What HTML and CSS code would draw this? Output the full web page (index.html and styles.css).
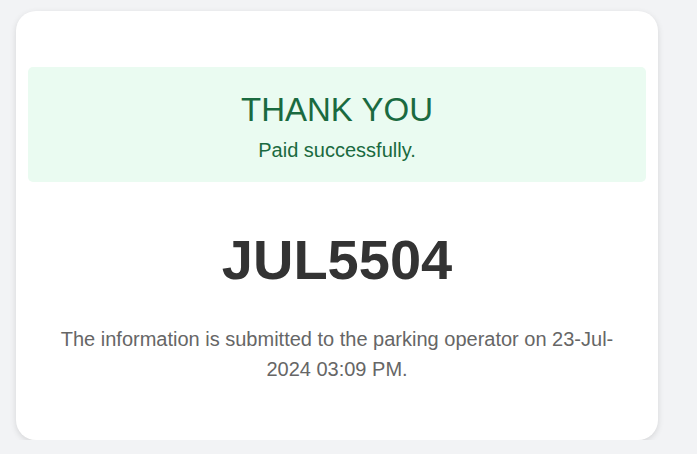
FILE: index.html
```html
<!DOCTYPE html>
<html lang="en">
<head>
    <meta charset="UTF-8">
    <meta name="viewport" content="width=device-width, initial-scale=1.0">
    <title>Payment Receipt</title>
    <link rel="stylesheet" href="styles.css">
</head>
<body>
    <div class="receipt-card">
        <!-- Success banner -->
        <div class="success-box">
            <h1>THANK YOU</h1>
            <p>Paid successfully.</p>
        </div>

        <!-- Plate number -->
        <div class="plate">JUL5504</div>

        <p class="info">The information is submitted to the parking operator on 23-Jul-2024 03:09 PM.</p>
    </div>
</body>
</html>
```

FILE: styles.css
```css
/* Global styles */
body {
    font-family: 'Liberation Sans', Arial, sans-serif;
    margin: 0;
    padding: 11px 0 0 16px;
    background-color: #f2f3f5;
    color: #333;
}

.receipt-card {
    width: 642px;
    height: 429px;
    box-sizing: border-box;
    padding: 56px 12px 0;
    background-color: white;
    border-radius: 20px;
    box-shadow: 0 2px 6px rgba(0, 0, 0, 0.12);
    text-align: center;
}

/* Success banner */
.success-box {
    height: 115px;
    box-sizing: border-box;
    padding-top: 24px;
    background-color: #eafbf1;
    border-radius: 5px;
    color: #1a6a40;
}

.success-box h1 {
    margin: 0;
    font-size: 33px;
    font-weight: normal;
}

.success-box p {
    margin: 10px 0 0;
    font-size: 20px;
}

.plate {
    margin-top: 45px;
    font-size: 56px;
    font-weight: bold;
    color: #333;
}

.info {
    margin: 32px 24px 0;
    font-size: 20px;
    line-height: 30px;
    color: #666;
}
```
